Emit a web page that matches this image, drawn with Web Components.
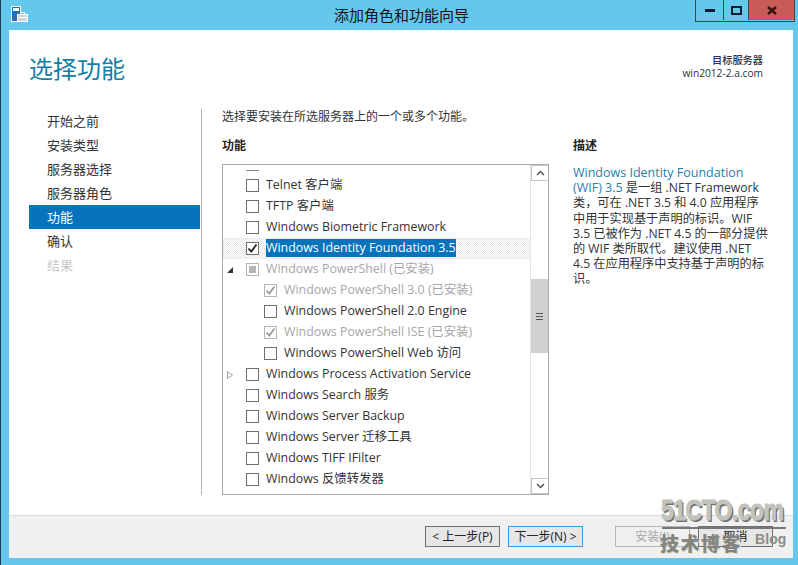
<!DOCTYPE html>
<html lang="zh"><head><meta charset="utf-8"><title>添加角色和功能向导</title>
<style>
html,body{margin:0;padding:0;width:798px;height:565px;overflow:hidden;background:#63c8ec}
body{font:12px/15px "Open Sans","Noto Sans CJK SC",sans-serif;color:#333}
</style></head><body>
<template id="t-window"><style>
:host{display:flex;flex-direction:column;width:798px;height:565px;box-sizing:border-box;position:relative;background:#63c8ec;border-left:1px solid #1d3b58}
.panel{margin:0 5px 7px 8px;flex:1;display:flex;flex-direction:column;background:#fff;min-height:0}
</style><slot name="title"></slot><div class="panel"><slot></slot></div><slot name="over"></slot></template>

<template id="t-title"><style>
:host{display:flex;height:30px;flex:none;position:relative;align-items:flex-start}
.ico{margin:6px 0 0 10px;width:17px;height:17px;flex:none}
.t{flex:1;text-align:center;font-size:15px;line-height:20px;margin-top:5px;color:#111;padding-left:80px}
.btns{display:flex;height:21px;margin-right:3px;flex:none;border:solid #3b4a44;border-width:0 1px 1px}
.b{display:flex;align-items:center;justify-content:center;height:20px;box-sizing:border-box}
.min{width:28px;border-right:1px solid #3b4a44}.max{width:25px;border-right:1px solid #3b4a44}.cl{width:45px;background:#c75b55}
</style>
<svg class="ico" viewBox="0 0 17 17"><rect x=".5" y=".5" width="9" height="15" fill="#2a6fb0" stroke="#fff"/><rect x="2" y="2" width="6" height="3" fill="#fff"/><rect x="6.5" y="8.5" width="10" height="7" fill="#cfd6dc" stroke="#fff"/><path d="M9.5 8.500V6.500h4v2M6.500 11.500h10" fill="none" stroke="#fff"/></svg>
<div class="t"><slot></slot></div>
<div class="btns">
<div class="b min"><svg width="10" height="4"><rect width="10" height="3" y="1" fill="#111830"/></svg></div>
<div class="b max"><svg width="11" height="9"><rect x="1" y="1" width="9" height="7" fill="none" stroke="#111830" stroke-width="2"/></svg></div>
<div class="b cl"><svg width="10" height="9"><path d="M1 1l8 7M9 1L1 8" stroke="#3a1010" stroke-width="2.400"/></svg></div>
</div></template>

<template id="t-head"><style>
:host{display:flex;height:79px;flex:none;box-sizing:border-box;padding:0 30px 0 20px;justify-content:space-between}
h1{margin:22px 0 0;font-weight:400;font-size:24px;line-height:34px;color:#0f7ea6}
.s{margin-top:24px;text-align:right;font-size:10.200px;line-height:13px;color:#2b3040}
.s b{display:block;font-weight:500}
</style><h1><slot></slot></h1><div class="s"><b><slot name="l"></slot></b><slot name="v"></slot></div></template>

<template id="t-cols"><style>
:host{display:flex;height:386px;flex:none;padding-left:20px}
.r{flex:1;display:flex;border-left:1px solid #b4b4b4;margin-left:1px;padding-left:20px;min-width:0}
</style><slot name="nav"></slot><div class="r"><slot></slot></div></template>

<template id="t-nav"><style>
:host{display:block;width:171px;flex:none;padding-top:0}
</style><slot></slot></template>

<template id="t-navitem"><style>
:host{display:block;height:24px;line-height:24px;padding-left:18px;font-size:13px;color:#333}
:host([sel]){background:#0673bc;color:#fff}
:host([off]){color:#c8c8c8}
</style><slot></slot></template>

<template id="t-main"><style>
:host{display:flex;flex-direction:column;width:327px;flex:none}
.i{height:15px;font-size:12px;line-height:15px}
.l{margin-top:14px;height:15px;line-height:15px;font-weight:600;color:#222}
.b{margin-top:11px;height:331px;box-sizing:border-box;border:1px solid #a9a9a9;display:flex;background:#fff}
.rows{flex:1;min-width:0;display:flex;flex-direction:column}
</style><div class="i"><slot name="intro"></slot></div><div class="l"><slot name="label"></slot></div>
<div class="b"><div class="rows"><slot></slot></div><slot name="bar"></slot></div></template>

<template id="t-row"><style>
:host{display:flex;align-items:center;height:21px;flex:none;font-size:12.400px;color:#333;padding-left:23px;position:relative;white-space:nowrap}
:host([level="1"]){padding-left:41px}
:host([dim]){color:#a6a6a6}
:host([sel]){background-image:conic-gradient(#e4e8ea 25%,#fff 0 50%,#e4e8ea 0 75%,#fff 0);background-size:2px 2px;outline:1px solid #eceff0;outline-offset:-1px}
.x{position:absolute;left:3px;top:7px;width:8px;height:8px}
.c{width:13px;height:13px;box-sizing:border-box;border:1px solid #707070;background:#fff;margin-right:7px;flex:none;display:flex;align-items:center;justify-content:center}
:host([dim]) .c{border-color:#b5b5b5}
.t{line-height:19px;margin-bottom:2px}
:host([sel]) .t{background:#0673bc;color:#fff;padding-right:0}
.m{width:7px;height:7px;background:#b5b5b5;display:none}
svg.k{display:none}
:host([state="mixed"]) .m{display:block}
:host([state="on"]) svg.k{display:block}
svg.e{display:none}
:host([exp="open"]) .o,:host([exp="closed"]) .cl{display:block}
</style>
<svg class="x e o" viewBox="0 0 8 8"><path d="M7 1v6H1z" fill="#333"/></svg>
<svg class="x e cl" viewBox="0 0 8 8"><path d="M1.500.5l5 3.500-5 3.500z" fill="#fff" stroke="#a0a0a0"/></svg>
<span class="c"><i class="m"></i><svg class="k" width="11" height="11" viewBox="0 0 11 11"><path d="M1.500 5.500l2.800 3L9.500 1.500" fill="none" stroke="var(--k,#222)" stroke-width="1.800"/></svg></span><span class="t"><slot></slot></span></template>

<template id="t-stub"><style>
:host{display:block;height:10px;flex:none;padding:5px 0 0 23px;box-sizing:border-box}
i{display:block;width:13px;height:1px;background:#8a8a8a}
</style><i></i></template>

<template id="t-bar"><style>
:host{display:flex;flex-direction:column;width:17px;flex:none;border-left:1px solid #e4e4e4;box-sizing:content-box}
.a{height:16px;flex:none;box-sizing:border-box;border:1px solid #c6c6c0;border-right:0;background:#fff;display:flex;align-items:center;justify-content:center}
.s{height:98px;flex:none}.g{flex:1}
.th{height:74px;flex:none;background:#d0d0d0;display:flex;align-items:center;justify-content:center}
</style><div class="a"><svg width="9" height="6"><path d="M1 5l3.500-3.500L8 5" fill="none" stroke="#555" stroke-width="1.500"/></svg></div><div class="s"></div>
<div class="th"><svg width="7" height="7"><path d="M0 .5h7M0 3.500h7M0 6.500h7" stroke="#555"/></svg></div><div class="g"></div>
<div class="a"><svg width="9" height="6"><path d="M1 1l3.500 3.500L8 1" fill="none" stroke="#555" stroke-width="1.500"/></svg></div></template>

<template id="t-desc"><style>
:host{display:block;width:205px;margin-left:24px;flex:none;font-size:12.200px;line-height:15.200px;color:#333}
.l{margin-top:29px;height:15px;line-height:15px;font-size:12px;font-weight:600;color:#222}
.b{margin-top:12px}
::slotted(a){color:#1f7fae;font-size:12.500px}
</style><div class="l"><slot name="label"></slot></div><div class="b"><slot></slot></div></template>

<template id="t-foot"><style>
:host{display:flex;flex:none;height:43px;box-sizing:border-box;margin-top:20px;background:#f0f0f0;border-top:1px solid #dcdcdc;padding:10px 20px 0 416px;gap:8px}
::slotted(:nth-child(2)){margin-right:24px}
</style><slot></slot></template>

<template id="t-btn"><style>
:host{display:flex;align-items:center;justify-content:center;width:75px;height:21px;box-sizing:border-box;border:1px solid #707070;background:#e6e6e6;font-size:12px;line-height:19px;color:#222;white-space:nowrap}
:host([def]){border-color:#3c9ade}
:host([off]){border-color:#b5b5b5;background:#f0f0f0;color:#a8a8a8}
</style><slot></slot></template>

<template id="t-mark"><style>
:host{position:absolute;left:660px;top:494px;width:128px;height:62px;display:block;color:#8f8f8c;pointer-events:none}
.a{position:absolute;left:0;top:0;font:700 30px/32px "Liberation Sans",sans-serif;letter-spacing:-.8px;transform-origin:0 0;transform:scaleX(.77);color:#c3c3bd;-webkit-text-stroke:1px #c3c3bd;text-shadow:2px 2px 0 #6f6f6c;white-space:nowrap}
.r{position:absolute;left:1px;top:33px;width:124px;height:2px;background:#777}
.b{position:absolute;left:-1px;top:37px;font:900 19px/23px "Noto Sans CJK SC",sans-serif;letter-spacing:1.500px;color:#85857f;text-shadow:1px 1px 0 #d8d8d4}
.c{position:absolute;left:94px;top:37px;font:700 14px/16px "Liberation Sans",sans-serif;letter-spacing:.1px;color:#8c8c88}
</style><div class="a"><slot name="a"></slot></div><div class="r"></div><div class="b"><slot name="b"></slot></div><div class="c"><slot name="c"></slot></div></template>

<wiz-window>
 <wiz-title slot="title">添加角色和功能向导</wiz-title>
 <wiz-head>选择功能<span slot="l">目标服务器</span><span slot="v">win2012-2.a.com</span></wiz-head>
 <wiz-cols>
  <wiz-nav slot="nav">
   <nav-item>开始之前</nav-item><nav-item>安装类型</nav-item><nav-item>服务器选择</nav-item><nav-item>服务器角色</nav-item><nav-item sel>功能</nav-item><nav-item>确认</nav-item><nav-item off>结果</nav-item>
  </wiz-nav>
  <wiz-main>
   <span slot="intro">选择要安装在所选服务器上的一个或多个功能。</span>
   <span slot="label">功能</span>
   <row-stub></row-stub>
   <feat-row>Telnet 客户端</feat-row>
   <feat-row>TFTP 客户端</feat-row>
   <feat-row>Windows Biometric Framework</feat-row>
   <feat-row sel state="on">Windows Identity Foundation 3.5</feat-row>
   <feat-row dim state="mixed" exp="open">Windows PowerShell (已安装)</feat-row>
   <feat-row dim level="1" state="on" style="--k:#999">Windows PowerShell 3.0 (已安装)</feat-row>
   <feat-row level="1">Windows PowerShell 2.0 Engine</feat-row>
   <feat-row dim level="1" state="on" style="--k:#999">Windows PowerShell ISE (已安装)</feat-row>
   <feat-row level="1">Windows PowerShell Web 访问</feat-row>
   <feat-row exp="closed">Windows Process Activation Service</feat-row>
   <feat-row>Windows Search 服务</feat-row>
   <feat-row>Windows Server Backup</feat-row>
   <feat-row>Windows Server 迁移工具</feat-row>
   <feat-row>Windows TIFF IFilter</feat-row>
   <feat-row>Windows 反馈转发器</feat-row>
   <scroll-bar slot="bar"></scroll-bar>
  </wiz-main>
  <wiz-desc><span slot="label">描述</span><a>Windows Identity Foundation<br>(WIF) 3.5</a> 是一组 .NET Framework<br>类，可在 .NET 3.5 和 4.0 应用程序<br>中用于实现基于声明的标识。WIF<br>3.5 已被作为 .NET 4.5 的一部分提供<br>的 WIF 类所取代。建议使用 .NET<br>4.5 在应用程序中支持基于声明的标<br>识。</wiz-desc>
 </wiz-cols>
 <wiz-foot>
  <wiz-btn>&lt; 上一步(P)</wiz-btn><wiz-btn def>下一步(N) &gt;</wiz-btn><wiz-btn off>安装(I)</wiz-btn><wiz-btn>取消</wiz-btn>
 </wiz-foot>
 <water-mark slot="over"><span slot="a">51CTO.com</span><span slot="b">技术博客</span><span slot="c">Blog</span></water-mark>
</wiz-window>
<script>
const map={'wiz-window':'t-window','wiz-title':'t-title','wiz-head':'t-head','wiz-cols':'t-cols','wiz-nav':'t-nav','nav-item':'t-navitem','wiz-main':'t-main','feat-row':'t-row','row-stub':'t-stub','scroll-bar':'t-bar','wiz-desc':'t-desc','wiz-foot':'t-foot','wiz-btn':'t-btn','water-mark':'t-mark'};
for(const [n,id] of Object.entries(map)){
 customElements.define(n,class extends HTMLElement{constructor(){super();this.attachShadow({mode:'open'}).appendChild(document.getElementById(id).content.cloneNode(true));}});
}
</script>
</body></html>
